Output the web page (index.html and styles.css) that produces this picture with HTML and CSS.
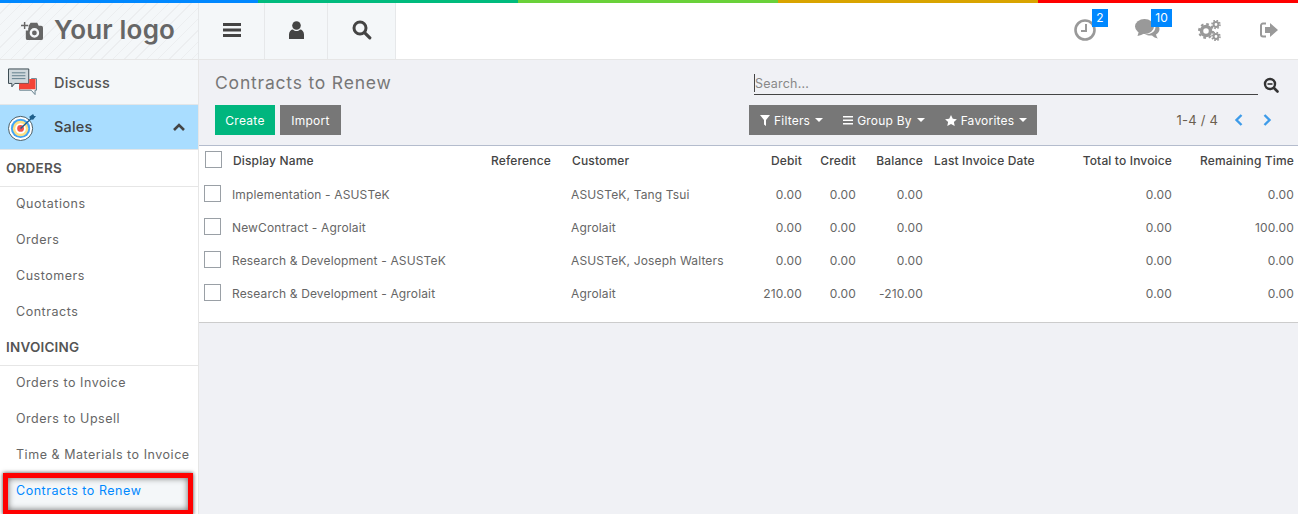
FILE: index.html
```html
<!DOCTYPE html>
<html lang="en">
<head>
  <meta charset="UTF-8">
  <title>Contracts to Renew</title>
  <link rel="stylesheet" href="styles.css">
</head>
<body>
  <div class="rainbow"><i class="c1"></i><i class="c2"></i><i class="c3"></i><i class="c4"></i><i class="c5"></i></div>

  <header class="topbar">
    <div class="logo">
      <svg class="logo-icon" viewBox="0 0 24 22"><path d="M0 5h3V2h1.500v3h3v1.500h-3v3H3v-3H0z"/><path fill-rule="evenodd" d="M8 6l2-3h7l1.500 3H21a2 2 0 0 1 2 2v11a2 2 0 0 1-2 2H7a2 2 0 0 1-2-2v-8h2.500V8H8zM14 8.500a5 5 0 1 0 0 10 5 5 0 0 0 0-10zM14 11a2.500 2.500 0 1 1 0 5 2.500 2.500 0 0 1 0-5z"/></svg>
      <span class="logo-text">Your logo</span>
    </div>
    <div class="top-btn menu-btn">
      <svg width="18" height="14" viewBox="0 0 18 14"><path fill="#444" d="M0 0h18v3H0zM0 5.500h18v3H0zM0 11h18v3H0z"/></svg>
    </div>
    <div class="top-btn user-btn">
      <svg width="15" height="18" viewBox="0 0 15 18"><circle cx="7.500" cy="4.500" r="4.300" fill="#444"/><path fill="#444" d="M0 18v-4.500C0 10.500 2 8.500 4 8.500c1 1 2.200 1.500 3.500 1.500s2.500-.5 3.500-1.500c2 0 4 2 4 5V18z"/></svg>
    </div>
    <div class="top-btn search-btn">
      <svg width="20" height="20" viewBox="0 0 20 20"><circle cx="8" cy="8" r="6" fill="none" stroke="#444" stroke-width="3"/><path stroke="#444" stroke-width="3.200" stroke-linecap="round" d="M12.800 12.800l5 5"/></svg>
    </div>
    <div class="top-right">
      <div class="sys-icon clock">
        <svg width="22" height="22" viewBox="0 0 22 22"><circle cx="11" cy="11" r="9.500" fill="none" stroke="#999" stroke-width="2.600"/><path fill="none" stroke="#999" stroke-width="2" d="M12 5v7H7"/></svg>
        <span class="badge">2</span>
      </div>
      <div class="sys-icon chat">
        <svg width="25" height="22" viewBox="0 0 25 22"><path fill="#999" d="M19.500 4c3 1 5 3 5 6 0 2.500-1.500 4.500-3.500 5.500.3 1.500 1 3 2 4-2.500-.5-4.500-1.500-6-3-2.500.3-5 0-7-1.500 7 1 13-4 9.500-11z"/><ellipse cx="9.500" cy="7.500" rx="9.500" ry="7.500" fill="#999"/><path fill="#999" d="M4 12l-1.500 5c2.500-.5 5-1.500 6.500-2.500z"/></svg>
        <span class="badge">10</span>
      </div>
      <div class="sys-icon gears">
        <svg width="23" height="21" viewBox="0 0 23 21"><g fill="none" stroke="#999"><circle cx="8" cy="11" r="4.500" stroke-width="3.500"/><circle cx="8" cy="11" r="7" stroke-width="2" stroke-dasharray="2.700 2.800"/><circle cx="18" cy="4.500" r="2.400" stroke-width="2"/><circle cx="18" cy="4.500" r="4" stroke-width="1.600" stroke-dasharray="1.600 1.540"/><circle cx="18" cy="16.500" r="2.400" stroke-width="2"/><circle cx="18" cy="16.500" r="4" stroke-width="1.600" stroke-dasharray="1.600 1.540"/></g></svg>
      </div>
      <div class="sys-icon logout">
        <svg width="18" height="16" viewBox="0 0 18 16"><path fill="none" stroke="#999" stroke-width="2" d="M6 1.500H3a2 2 0 0 0-2 2v9a2 2 0 0 0 2 2h3"/><path fill="#999" d="M5 5h5V1l8 7-8 7v-4H5z"/></svg>
      </div>
    </div>
  </header>

  <div class="layout">
    <aside class="sidebar">
      <div class="app-row">
        <svg class="app-icon" viewBox="0 0 30 29"><path fill="none" stroke="#607d8b" d="M12 18v5h12l4 4.500V23h1.500V11H24"/><path fill="#cfd8dc" stroke="#37474f" d="M.5 1h21v15H7l-3 3.500V16H.5z"/><path stroke="#607d8b" d="M4 5h14M4 8h14M4 11h14"/><path fill="#f44336" d="M11.500 16H22v-4.500h6.500V22h-17z"/></svg>
        <span>Discuss</span>
      </div>
      <div class="app-row active">
        <svg class="app-icon" viewBox="0 0 30 29"><circle cx="13" cy="16" r="12.500" fill="#fff" stroke="#455a64"/><circle cx="13" cy="16" r="10" fill="#42a5f5"/><circle cx="13" cy="16" r="8" fill="#ffe082"/><circle cx="13" cy="16" r="5.500" fill="#fff"/><circle cx="13" cy="16" r="3.500" fill="#ef5350"/><path stroke="#1f5f8b" stroke-width="1.500" d="M13 16L25 5"/><path fill="#1f5f8b" d="M22 4l4-3 1 2 2 0-3 4-3-.500z"/></svg>
        <span>Sales</span>
        <svg class="chevron" width="12" height="8" viewBox="0 0 12 8"><path fill="none" stroke="#444" stroke-width="2.600" d="M1 7l5-5 5 5"/></svg>
      </div>

      <div class="menu-head">ORDERS</div>
      <a class="menu-link">Quotations</a>
      <a class="menu-link">Orders</a>
      <a class="menu-link">Customers</a>
      <a class="menu-link">Contracts</a>

      <div class="menu-head">INVOICING</div>
      <a class="menu-link">Orders to Invoice</a>
      <a class="menu-link">Orders to Upsell</a>
      <a class="menu-link">Time &amp; Materials to Invoice</a>
      <a class="menu-link current">Contracts to Renew</a>
    </aside>

    <main class="content">
      <div class="control-panel">
        <div class="panel-left">
          <h1>Contracts to Renew</h1>
          <div class="buttons">
            <button class="btn green">Create</button>
            <button class="btn grey">Import</button>
          </div>
        </div>
        <div class="panel-right">
          <div class="search-row">
            <div class="search-box"><span class="caret"></span>Search...</div>
            <svg width="16" height="16" viewBox="0 0 16 16"><circle cx="7" cy="7" r="5" fill="none" stroke="#333" stroke-width="2.400"/><path stroke="#333" stroke-width="1.600" d="M4.500 7h5"/><path stroke="#333" stroke-width="2.600" stroke-linecap="round" d="M11 11l3.500 3.500"/></svg>
          </div>
          <div class="filter-row">
            <div class="filters">
              <span class="filter">
                <svg width="10" height="11" viewBox="0 0 10 11"><path fill="#fff" d="M0 0h10L6 5v6L4 9.500V5z"/></svg>
                Filters<i class="arrow"></i>
              </span>
              <span class="filter">
                <svg width="10" height="9" viewBox="0 0 10 9"><path fill="#fff" d="M0 0h10v1.500H0zM0 3.500h10V5H0zM0 7h10v1.500H0z"/></svg>
                Group By<i class="arrow"></i>
              </span>
              <span class="filter">
                <svg width="12" height="11" viewBox="0 0 12 11"><path fill="#fff" d="M6 0l1.800 3.700 4.100.5-3 2.900.8 3.900L6 9.100 2.300 11l.8-3.900-3-2.900 4.100-.5z"/></svg>
                Favorites<i class="arrow"></i>
              </span>
            </div>
            <div class="pager">
              <span>1-4 / 4</span>
              <svg width="9" height="12" viewBox="0 0 9 12"><path fill="none" stroke="#3d9be9" stroke-width="2.400" d="M7.500 1l-5 5 5 5"/></svg>
              <svg class="pager-next" width="9" height="12" viewBox="0 0 9 12"><path fill="none" stroke="#3d9be9" stroke-width="2.400" d="M1.500 1l5 5-5 5"/></svg>
            </div>
          </div>
        </div>
      </div>

      <div class="list">
        <table>
          <colgroup>
            <col class="w-check"><col class="w-name"><col class="w-ref"><col class="w-cust">
            <col class="w-debit"><col class="w-credit"><col class="w-bal"><col class="w-date">
            <col class="w-total"><col class="w-rem">
          </colgroup>
          <thead>
            <tr>
              <th><span class="check"></span></th>
              <th>Display Name</th>
              <th>Reference</th>
              <th>Customer</th>
              <th class="num">Debit</th>
              <th class="num">Credit</th>
              <th class="num">Balance</th>
              <th class="date">Last Invoice Date</th>
              <th class="num">Total to Invoice</th>
              <th class="num">Remaining Time</th>
            </tr>
          </thead>
          <tbody>
            <tr>
              <td><span class="check"></span></td>
              <td>Implementation - ASUSTeK</td><td></td><td>ASUSTeK, Tang Tsui</td>
              <td class="num">0.00</td><td class="num">0.00</td><td class="num">0.00</td><td></td>
              <td class="num">0.00</td><td class="num">0.00</td>
            </tr>
            <tr>
              <td><span class="check"></span></td>
              <td>NewContract - Agrolait</td><td></td><td>Agrolait</td>
              <td class="num">0.00</td><td class="num">0.00</td><td class="num">0.00</td><td></td>
              <td class="num">0.00</td><td class="num">100.00</td>
            </tr>
            <tr>
              <td><span class="check"></span></td>
              <td>Research &amp; Development - ASUSTeK</td><td></td><td>ASUSTeK, Joseph Walters</td>
              <td class="num">0.00</td><td class="num">0.00</td><td class="num">0.00</td><td></td>
              <td class="num">0.00</td><td class="num">0.00</td>
            </tr>
            <tr>
              <td><span class="check"></span></td>
              <td>Research &amp; Development - Agrolait</td><td></td><td>Agrolait</td>
              <td class="num">210.00</td><td class="num">0.00</td><td class="num">-210.00</td><td></td>
              <td class="num">0.00</td><td class="num">0.00</td>
            </tr>
          </tbody>
        </table>
      </div>
    </main>
  </div>
</body>
</html>
```

FILE: styles.css
```css
* {
  box-sizing: border-box;
}

html, body {
  height: 100%;
}

body {
  margin: 0;
  overflow: hidden;
  font-family: Inter, "Noto Sans", sans-serif;
  font-size: 12.500px;
  letter-spacing: 0.2px;
  color: #555;
  background: #f0f1f5;
  display: flex;
  flex-direction: column;
}

.rainbow {
  display: flex;
  height: 3px;
  flex: none;
}

.rainbow i {
  flex: 1;
}

.rainbow .c1 {
  flex: none;
  width: 258px;
}

.c1 { background: #0088ff; }
.c2 { background: #00bb7e; }
.c3 { background: #6ad13a; }
.c4 { background: #d9a400; }
.c5 { background: #ff0000; }

/* top bar */
.topbar {
  display: flex;
  height: 57px;
  flex: none;
  background: #fff;
  border-bottom: 1px solid #e6e6e6;
}

.logo {
  width: 198px;
  display: flex;
  align-items: center;
  padding: 0 0 2px 21px;
  gap: 10px;
  background-color: #f4f7f9;
  background-image: repeating-linear-gradient(135deg, #f4f7f9 0, #f4f7f9 7px, #eceef0 7px, #eceef0 8px);
}

.logo-icon {
  width: 23px;
  height: 21px;
  fill: #666;
}

.logo-text {
  font-size: 26px;
  font-weight: 600;
  color: #666;
  letter-spacing: 0.2px;
  margin-top: -2px;
}

.top-btn {
  display: flex;
  align-items: center;
  justify-content: center;
  padding-bottom: 2px;
  background: #f4f7f9;
  border-left: 1px solid #e6e8ea;
}

.menu-btn {
  width: 66px;
}

.user-btn {
  width: 63px;
}

.search-btn {
  width: 69px;
  border-right: 1px solid #e6e8ea;
}

.top-right {
  margin-left: auto;
  display: flex;
  align-items: center;
  padding-bottom: 2px;
}

.sys-icon {
  position: relative;
  display: flex;
  justify-content: center;
  width: 62px;
}

.sys-icon.logout {
  width: 58px;
}

.badge {
  position: absolute;
  top: -10px;
  left: 38px;
  min-width: 16px;
  height: 18px;
  line-height: 17px;
  padding: 0 1px;
  text-align: center;
  background: #0088ff;
  color: #fff;
  font-size: 12px;
  letter-spacing: 0;
}

.chat .badge {
  left: 35px;
  min-width: 21px;
}

/* sidebar */
.layout {
  flex: 1;
  display: flex;
  min-height: 0;
}

.sidebar {
  width: 199px;
  flex: none;
  background: #fff;
  border-right: 1px solid #e6e6e6;
  display: flex;
  flex-direction: column;
}

.app-row {
  height: 45px;
  flex: none;
  display: flex;
  align-items: center;
  padding-left: 8px;
  gap: 17px;
  background: #f4f7f9;
  border-bottom: 1px solid #e3e6e8;
  font-size: 14.500px;
  font-weight: 500;
  color: #555;
}

.app-row.active {
  background: #a9ddff;
  color: #444;
  margin-bottom: 1px;
  padding-bottom: 1px;
}

.app-icon {
  width: 29px;
  height: 28px;
}

.chevron {
  margin-left: auto;
  margin-right: 13px;
}

.menu-head {
  height: 36px;
  flex: none;
  display: flex;
  align-items: center;
  padding: 0 0 2px 6px;
  font-weight: 600;
  font-size: 13.500px;
  color: #555;
  border-bottom: 1px solid #e6e6e6;
}

.menu-link {
  height: 36px;
  flex: none;
  display: flex;
  align-items: center;
  padding: 0 0 2px 16px;
  color: #666;
  letter-spacing: 0.53px;
}

.menu-head + .menu-link {
  margin-top: -1px;
}

.menu-link.current {
  color: #0088ff;
  margin: 0 5px 0 3px;
  padding: 0 0 7px 8px;
  height: 42px;
  background: #f4f7f9;
  border: 5px solid #f00;
  box-shadow: 0 0 4px #444, inset 0 0 6px #666;
}

/* control panel */
.content {
  flex: 1;
  min-width: 0;
}

.control-panel {
  height: 86px;
  display: flex;
  border-bottom: 1px solid #b4bccd;
  padding: 0 16px;
}

.panel-left {
  width: 534px;
}

h1 {
  margin: 11px 0 0;
  height: 34px;
  line-height: 24px;
  font-size: 17.500px;
  font-weight: 400;
  letter-spacing: 0.8px;
  color: #777;
}

.buttons {
  display: flex;
  gap: 5px;
}

.btn {
  height: 30px;
  padding: 0;
  border: 0;
  color: #fff;
  font: inherit;
  font-size: 12px;
  letter-spacing: 0.3px;
}

.btn.green {
  width: 60px;
  background: #00b67e;
}

.btn.grey {
  width: 61px;
  background: #777;
}

.panel-right {
  flex: 1;
}

.search-row {
  display: flex;
  align-items: center;
  margin-top: 14px;
  gap: 5px;
}

.search-box {
  width: 504px;
  margin-left: 5px;
  height: 21px;
  border-bottom: 1px solid #444;
  color: #888;
  line-height: 19px;
  display: flex;
}

.caret {
  width: 1px;
  height: 18px;
  background: #444;
}

.filter-row {
  display: flex;
  justify-content: space-between;
  align-items: center;
  margin-top: 10px;
}

.filters {
  height: 30px;
  width: 288px;
  background: #777;
  display: flex;
  align-items: center;
  padding-left: 11px;
  gap: 20px;
  color: #fff;
  font-size: 12px;
}

.filter {
  display: flex;
  align-items: center;
  gap: 4px;
  white-space: nowrap;
}

.arrow {
  width: 0;
  height: 0;
  border: 4px solid transparent;
  border-top-color: #fff;
  border-bottom: 0;
  margin-left: 1px;
}

.pager {
  display: flex;
  align-items: center;
  gap: 16px;
  margin-right: 10px;
  color: #6b5f4f;
  font-size: 13px;
}

.pager-next {
  margin-left: 4px;
}

/* list */
.list {
  background: #fff;
  height: 177px;
  border-bottom: 1px solid #ccc;
}

table {
  width: 1099px;
  table-layout: fixed;
  border-collapse: collapse;
}

.w-check { width: 27px; }
.w-name { width: 258px; }
.w-ref { width: 81px; }
.w-cust { width: 181px; }
.w-debit { width: 57px; }
.w-credit { width: 54px; }
.w-bal { width: 67px; }
.w-date { width: 150px; }
.w-total { width: 99px; }
.w-rem { width: 125px; }

th {
  height: 33px;
  text-align: left;
  font-size: 12px;
  font-weight: 500;
  color: #444;
  padding: 0 1px 4px 7px;
  white-space: nowrap;
  letter-spacing: 0.15px;
}

th.date {
  padding-left: 10px;
}

td {
  height: 33px;
  color: #666;
  font-size: 12px;
  padding: 0 1px 3px 6px;
  white-space: nowrap;
  letter-spacing: 0.15px;
}

th.num, td.num {
  text-align: right;
  padding-right: 1px;
  padding-left: 0;
}

th:last-child, td:last-child {
  padding-right: 4px;
}

.check {
  display: block;
  width: 17px;
  height: 17px;
  margin: -2px 0 0 -1px;
  border: 1px solid #9aa0a6;
  background: #fff;
}

td .check {
  margin-top: -2px;
}
```
